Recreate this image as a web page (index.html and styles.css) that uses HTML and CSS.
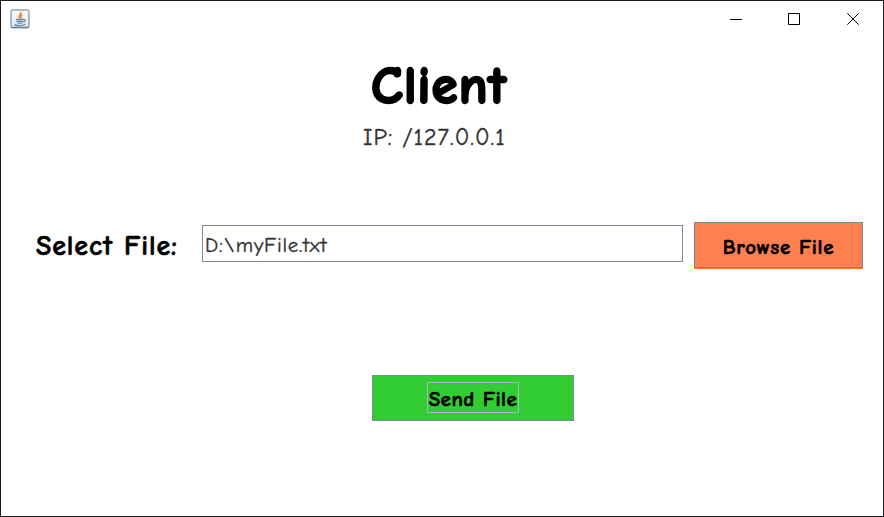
FILE: index.html
```html
<!DOCTYPE html>
<html lang="en">
<head>
<meta charset="utf-8">
<title>Client</title>
<link rel="stylesheet" href="styles.css">
</head>
<body>
<div class="window">
  <header class="titlebar">
    <svg class="java" width="20" height="20" viewBox="0 0 20 20">
      <defs><linearGradient id="g" x1="0" y1="0" x2="0" y2="1"><stop offset="0" stop-color="#fff"/><stop offset="1" stop-color="#d9e3ea"/></linearGradient></defs>
      <rect x="1" y="1" width="18" height="17.6" rx="1.5" fill="url(#g)" stroke="#8ba0b0" stroke-width="1.4"/>
      <path d="M1.5 18.5H18.5" stroke="#627c90" stroke-width="1.4"/>
      <path d="M10.8 3C11.5 5.5 7.5 6 9.8 9.5M12.3 5.5C10 6.8 11.8 7.8 10.5 9.5" fill="none" stroke="#ee8a3c" stroke-width="1.7"/>
      <path d="M6 10.5H13M6.3 12.3H12.7M7.3 14.2H12M13 10.6C16 10 15.5 13 12.8 13M4.5 15.6C7 17.2 13 17 15.3 15.3" fill="none" stroke="#6a8ba6" stroke-width="1.3"/>
    </svg>
    <div class="controls">
      <svg width="12" height="12" viewBox="0 0 12 12"><path d="M0 6.5H12"/></svg>
      <svg width="12" height="12" viewBox="0 0 12 12"><path d="M.5 .5H11.5V11.5H.5Z"/></svg>
      <svg class="close" width="12" height="12" viewBox="0 0 12 12"><path d="M.3 .3L11.7 11.7M11.7 .3L.3 11.7"/></svg>
    </div>
  </header>
  <main>
    <h1>Client</h1>
    <p class="ip">IP: /127.0.0.1</p>
    <div class="row">
      <div class="label">Select File:</div>
      <div class="field">D:\myFile.txt</div>
      <button class="browse">Browse File</button>
    </div>
    <button class="send"><span class="focus">Send File</span></button>
  </main>
</div>
</body>
</html>
```
FILE: styles.css
```css
* { box-sizing: border-box; }
body { margin: 0; font-family: "Comic Sans MS", "Comic Neue", Lato, sans-serif; color: #000; }
.window { width: 884px; height: 517px; background: #fff; border: 1px solid #1c1b20; overflow: hidden; }
.titlebar { height: 36px; display: flex; justify-content: space-between; padding: 8px 24px 0 9px; }
.java { margin-top: -.5px; }
.controls { display: flex; gap: 46px; padding-top: 4px; }
.controls svg { fill: none; stroke: #000; stroke-width: 1; }
.controls .close { margin-left: 1px; }
svg { display: block; }
h1, p { margin: 0; white-space: nowrap; }
h1 { height: 84px; padding-left: 370px; font-size: 53px; line-height: 98px; font-weight: 900; letter-spacing: 1.1px; -webkit-text-stroke: 2.3px #000; }
.ip { height: 101px; padding-left: 362px; font-size: 24px; line-height: 32px; color: #333; letter-spacing: 1px; -webkit-text-stroke: .4px #333; }
.row { display: flex; height: 47px; white-space: nowrap; }
.label { width: 201px; padding-left: 35px; font-size: 28px; line-height: 48px; font-weight: 700; letter-spacing: .9px; -webkit-text-stroke: .6px #000; }
.field { width: 481px; height: 37px; margin: 3px 11px 0 0; padding-left: 2px; border: 1px solid #7a8a99; font-size: 21px; line-height: 39px; color: #333; letter-spacing: .75px; -webkit-text-stroke: .35px #333; }
button { display: block; padding: 0; border: 1px solid #7a8a99; font: 900 21px "Comic Sans MS", "Comic Neue", Lato, sans-serif; color: #000; white-space: nowrap; letter-spacing: .65px; -webkit-text-stroke: .6px #000; }
.browse { width: 169px; height: 46px; background: #ff7f50; box-shadow: 0 1px #ff7043; line-height: 48px; }
.send { width: 202px; height: 46px; margin: 106px 0 0 371px; padding-bottom: 1px; background: #32cd32; }
.focus { display: block; width: 92px; height: 31px; margin: 0 auto; border: 1px solid #a3b8cc; line-height: 33px; letter-spacing: .5px; }
```
